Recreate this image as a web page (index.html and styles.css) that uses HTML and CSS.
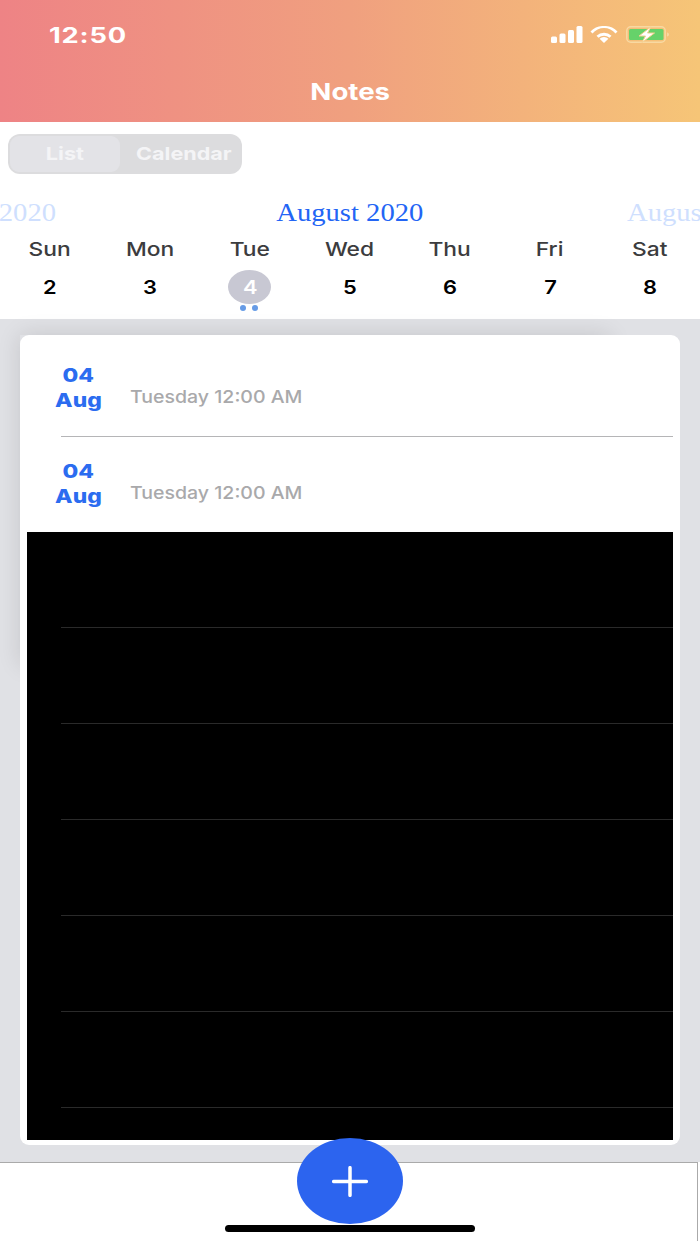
FILE: index.html
```html
<!DOCTYPE html>
<html lang="en">
<head>
<meta charset="utf-8">
<title>Notes</title>
<link rel="stylesheet" href="styles.css">
</head>
<body>
<div class="app">
  <header class="header">
    <div class="status">
      <span class="wide time">12:50</span>
      <div class="status-icons">
        <svg class="signal" viewBox="0 0 32 17" width="32" height="17"><rect x="0" y="10.500" width="6" height="6.500" rx="1.500"/><rect x="8.500" y="7.500" width="6" height="9.500" rx="1.500"/><rect x="17" y="4" width="6" height="13" rx="1.500"/><rect x="25.500" y="0" width="6" height="17" rx="1.500"/></svg>
        <svg class="wifi" viewBox="0 0 28 17" width="28" height="17"><path d="M14 17l-4.400-4.300a6.500 6.500 0 0 1 8.800 0z"/><path d="M14 6.800a11 11 0 0 1 7.500 3l-2 2a8.300 8.300 0 0 0-11 0l-2-2a11 11 0 0 1 7.500-3z"/><path d="M14 0a17.500 17.500 0 0 1 13.500 5.500l-2 2.100a14.500 14.500 0 0 0-23 0l-2-2.100A17.500 17.500 0 0 1 14 0z"/></svg>
        <svg class="battery" viewBox="0 0 45 17" width="45" height="17"><rect x="0.800" y="0.800" width="38.400" height="15.400" rx="4" class="batt-frame"/><rect x="3" y="3" width="34.500" height="11" rx="1.500" class="batt-fill"/><path d="M41 6.500c1.500.4 2 1.200 2 2s-.5 1.600-2 2z" class="batt-cap"/><path d="M25 0.800L13 10h6.500l-3.500 6.500L28.500 7h-7z" class="batt-bolt"/></svg>
      </div>
    </div>
    <h1 class="title"><span class="wide">Notes</span></h1>
  </header>

  <section class="calendar">
    <div class="segments">
      <div class="seg seg-active"><span class="wide">List</span></div>
      <div class="seg seg-other"><span class="wide">Calendar</span></div>
    </div>

    <div class="months">
      <div class="month month-prev"><span class="wide">2020</span></div>
      <div class="month month-current"><span class="wide">August 2020</span></div>
      <div class="month month-next"><span class="wide wide-left">August 2020</span></div>
    </div>

    <div class="days">
      <div class="dow"><span class="wide">Sun</span></div>
      <div class="dow"><span class="wide">Mon</span></div>
      <div class="dow"><span class="wide">Tue</span></div>
      <div class="dow"><span class="wide">Wed</span></div>
      <div class="dow"><span class="wide">Thu</span></div>
      <div class="dow"><span class="wide">Fri</span></div>
      <div class="dow"><span class="wide">Sat</span></div>

      <div class="date"><span class="wide">2</span></div>
      <div class="date"><span class="wide">3</span></div>
      <div class="date date-selected"><span class="wide">4</span><i class="dots"><b></b><b></b></i></div>
      <div class="date"><span class="wide">5</span></div>
      <div class="date"><span class="wide">6</span></div>
      <div class="date"><span class="wide">7</span></div>
      <div class="date"><span class="wide">8</span></div>
    </div>
  </section>

  <main class="main">
    <div class="card">
      <div class="note note-first">
        <div class="note-date"><span class="wide">04</span><span class="wide">Aug</span></div>
        <div class="note-time"><span class="wide wide-left">Tuesday 12:00 AM</span></div>
      </div>
      <div class="note">
        <div class="note-date"><span class="wide">04</span><span class="wide">Aug</span></div>
        <div class="note-time"><span class="wide wide-left">Tuesday 12:00 AM</span></div>
      </div>
      <div class="hidden-notes">
        <div class="black-row"></div>
        <div class="black-row"></div>
        <div class="black-row"></div>
        <div class="black-row"></div>
        <div class="black-row"></div>
        <div class="black-row"></div>
      </div>
    </div>
  </main>

  <footer class="footer">
    <button class="fab" type="button" aria-label="Add note">
      <svg viewBox="0 0 36 31" width="36" height="31"><path d="M18 1.700v27.600M1.700 15.500h32.600"/></svg>
    </button>
    <div class="home-indicator"></div>
  </footer>
</div>
</body>
</html>
```
FILE: styles.css
```css
* { box-sizing: border-box; }
html, body { margin: 0; padding: 0; }
body {
  background: #fff;
  font-family: "Inter", "Liberation Sans", sans-serif;
}
.app {
  width: 700px;
  height: 1244px;
  display: flex;
  flex-direction: column;
  overflow: hidden;
}
.wide {
  display: inline-block;
  transform: scaleX(1.2);
  white-space: nowrap;
}
.wide-left { transform-origin: left center; }

/* header */
.header {
  height: 122px;
  flex: none;
  background: linear-gradient(90deg, #ee8385 0%, #f0a07f 50%, #f6c577 100%);
  color: #fff;
  padding-top: 21px;
}
.status {
  height: 27px;
  display: flex;
  align-items: center;
  justify-content: space-between;
  padding: 0 29px 0 49px;
}
.time {
  font-size: 21px;
  line-height: 27px;
  padding-top: 1px;
  font-weight: 700;
  letter-spacing: .6px;
  transform: scaleX(1.3);
  transform-origin: left center;
}
.status-icons {
  display: flex;
  align-items: center;
  gap: 7px;
}
.signal, .wifi { fill: #fff; }
.battery { margin-left: 1px; }
.batt-frame { fill: none; stroke: #f8d9a2; stroke-width: 1.500; }
.batt-fill { fill: #66d26a; }
.batt-cap { fill: #f8d9a2; }
.batt-bolt { fill: #fff; stroke: #f5cf8e; stroke-width: 1; }
.title {
  margin: 30px 0 0;
  height: 28px;
  line-height: 28px;
  text-align: center;
  font-size: 23px;
  font-weight: 700;
}

/* calendar */
.calendar {
  flex: none;
  height: 197px;
  background: #fff;
  padding-top: 12px;
}
.segments {
  margin-left: 8px;
  width: 234px;
  height: 40px;
  padding: 2px;
  border-radius: 12px;
  background: #dcdcde;
  display: flex;
  color: #f4f4f6;
  font-size: 18px;
  line-height: 20px;
  font-weight: 700;
}
.seg {
  flex: 1;
  display: flex;
  align-items: center;
  justify-content: center;
  padding-bottom: 1px;
}
.seg-other { padding-left: 7px; }
.seg-active {
  flex: 0 0 110px;
  background: #e3e3e7;
  border-radius: 9px;
}
.months {
  margin-top: 25px;
  height: 27px;
  display: flex;
  font-family: "Liberation Serif", serif;
  font-size: 26px;
  line-height: 28px;
  color: #2365f5;
}
.months .wide { transform: scaleX(1.1); }
.month-current { flex: 1; text-align: center; margin-left: 17px; }
.month-prev, .month-next {
  color: #cfdffe;
  white-space: nowrap;
}
.month-prev { flex: 0 0 56px; text-align: right; }
.month-prev .wide { transform-origin: right center; }
.month-next { flex: 0 0 73px; overflow: hidden; }
.days {
  margin-top: 10px;
  display: grid;
  grid-template-columns: repeat(7, 100px);
  grid-template-rows: 28px 34px;
  row-gap: 6px;
  text-align: center;
}
.dow {
  font-size: 19px;
  line-height: 28px;
  font-weight: 500;
  color: #3c3c3e;
}
.date {
  position: relative;
  font-size: 19px;
  line-height: 36px;
  font-weight: 600;
  color: #000;
}
.date .wide { transform: scaleX(1.15); }
.date-selected { color: #fff; }
.date-selected::before {
  content: "";
  position: absolute;
  left: 28px;
  top: 0;
  width: 43px;
  height: 34px;
  border-radius: 50%;
  background: #c8c8d3;
  z-index: 0;
}
.date-selected .wide { position: relative; }
.dots {
  position: absolute;
  left: 40px;
  top: 35px;
  display: flex;
  gap: 6px;
}
.dots b {
  width: 6px;
  height: 6px;
  border-radius: 50%;
  background: #669be6;
}

/* list */
.main {
  flex: none;
  height: 843px;
  background: #e0e1e5;
  padding: 16px 20px 17px;
  position: relative;
  isolation: isolate;
}
.main::before {
  content: "";
  position: absolute;
  left: 20px;
  top: 16px;
  width: 590px;
  height: 330px;
  box-shadow: 0 0 22px rgba(0, 0, 0, .12);
  z-index: -1;
}
.card {
  height: 810px;
  background: #fff;
  border-radius: 9px;
  padding: 0 7px 5px;
  display: flex;
  flex-direction: column;
}
.note {
  flex: none;
  height: 95px;
  position: relative;
  display: flex;
  align-items: center;
  padding-left: 21px;
  padding-bottom: 1px;
}
.note-first { height: 102px; padding-top: 5px; }
.note-first::after {
  content: "";
  position: absolute;
  left: 34px;
  right: 0;
  bottom: 0;
  height: 1px;
  background: #b5b5b7;
}
.note-date {
  width: 60px;
  flex: none;
  display: flex;
  flex-direction: column;
  align-items: center;
  font-size: 19px;
  line-height: 25px;
  font-weight: 800;
  color: #2b6cf0;
}
.note-time {
  margin-left: 22px;
  font-size: 17.500px;
  font-weight: 500;
  color: #a9a9ab;
  padding-top: 17px;
}
.note-time .wide { transform: scaleX(1.115); }
.hidden-notes {
  flex: 1;
  background: #000;
  overflow: hidden;
}
.black-row {
  height: 96px;
  margin-left: 34px;
  border-bottom: 1px solid #2a2a2a;
}

/* footer */
.footer {
  flex: none;
  height: 79px;
  width: 698px;
  position: relative;
  background: #fff;
  border-top: 1px solid #aaa;
  border-right: 1px solid #aaa;
}
.fab {
  position: absolute;
  left: 297px;
  top: -25px;
  width: 106px;
  height: 86px;
  padding: 0;
  border: 0;
  border-radius: 50%;
  background: #2c64ef;
  display: flex;
  align-items: center;
  justify-content: center;
}
.fab path {
  fill: none;
  stroke: #fff;
  stroke-width: 3.500;
  stroke-linecap: round;
}
.home-indicator {
  position: absolute;
  left: 225px;
  top: 62px;
  width: 250px;
  height: 7px;
  border-radius: 4px;
  background: #000;
}
```
